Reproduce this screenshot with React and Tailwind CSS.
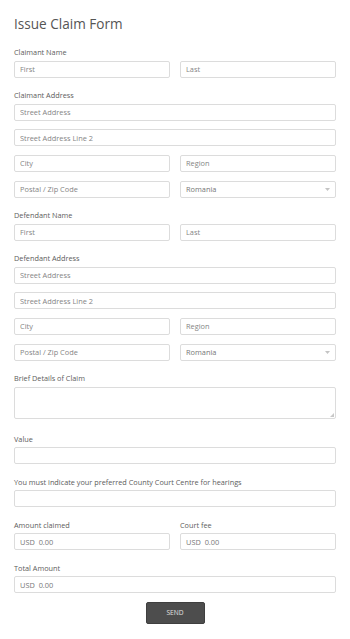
import React from 'react';

const inputCls =
  'block w-full h-[17px] rounded-[2px] border border-[#dcdcdc] bg-white px-[5px] text-[7.4px] text-[#777] placeholder:text-[#858585] outline-none';

const Label = ({ children, className = '' }) => (
  <div className={`text-[7.3px] leading-[10px] text-[#5c5c5c] mb-[3.5px] ${className}`}>{children}</div>
);

const Input = ({ placeholder, value }) =>
  value !== undefined ? (
    <input className={inputCls} defaultValue={value} readOnly />
  ) : (
    <input className={inputCls} placeholder={placeholder} />
  );

const Select = ({ value }) => (
  <div className="relative">
    <select className={`${inputCls} appearance-none`} defaultValue={value}>
      <option>{value}</option>
    </select>
    <svg className="absolute right-[6px] top-[7.5px]" width="5" height="3" viewBox="0 0 5 3">
      <path d="M0 0 L5 0 L2.5 3 Z" fill="#c4c4c4" />
    </svg>
  </div>
);

const Address = () => (
  <div className="flex flex-col gap-[8.7px]">
    <Input placeholder="Street Address" />
    <Input placeholder="Street Address Line 2" />
    <div className="grid grid-cols-2 gap-[10px]">
      <Input placeholder="City" />
      <Input placeholder="Region" />
    </div>
    <div className="grid grid-cols-2 gap-[10px]">
      <Input placeholder="Postal / Zip Code" />
      <Select value="Romania" />
    </div>
  </div>
);

const Name = () => (
  <div className="grid grid-cols-2 gap-[10px]">
    <Input placeholder="First" />
    <Input placeholder="Last" />
  </div>
);

export default function App() {
  return (
    <div className="w-[350px] min-h-[639px] bg-white px-[14px] pt-[15px] pb-[15px]" style={{ fontFamily: '"Open Sans", "Liberation Sans", sans-serif' }}>
      <h1 className="text-[13.6px] leading-[18px] text-[#555] font-normal mb-[14px]">Issue Claim Form</h1>

      <Label>Claimant Name</Label>
      <Name />

      <div className="mt-[12.5px]">
        <Label>Claimant Address</Label>
        <Address />
      </div>

      <div className="mt-[12.5px]">
        <Label>Defendant Name</Label>
        <Name />
      </div>

      <div className="mt-[12.5px]">
        <Label>Defendant Address</Label>
        <Address />
      </div>

      <div className="mt-[12.5px]">
        <Label>Brief Details of Claim</Label>
        <div className="relative">
          <textarea className="block w-full h-[32px] resize-none rounded-[2px] border border-[#dcdcdc] bg-white px-[5px] text-[7.4px] outline-none" />
          <svg className="absolute right-[2px] bottom-[2px]" width="4" height="4" viewBox="0 0 4 4">
            <path d="M4 0 L4 4 L0 4 Z" fill="#c8c8c8" />
          </svg>
        </div>
      </div>

      <div className="mt-[15.3px]">
        <Label>Value</Label>
        <Input placeholder="" />
      </div>

      <div className="mt-[12.5px]">
        <Label>You must indicate your preferred County Court Centre for hearings</Label>
        <Input placeholder="" />
      </div>

      <div className="mt-[12.5px] grid grid-cols-2 gap-[10px]">
        <div>
          <Label>Amount claimed</Label>
          <Input value="USD  0.00" />
        </div>
        <div>
          <Label>Court fee</Label>
          <Input value="USD  0.00" />
        </div>
      </div>

      <div className="mt-[12.5px]">
        <Label>Total Amount</Label>
        <Input value="USD  0.00" />
      </div>

      <div className="mt-[8.5px] flex justify-center">
        <button className="w-[59px] h-[22px] rounded-[2px] bg-[#4d4d4d] border border-[#3f3f3f] text-[6.6px] text-[#e0e0e0]">
          SEND
        </button>
      </div>
    </div>
  );
}
